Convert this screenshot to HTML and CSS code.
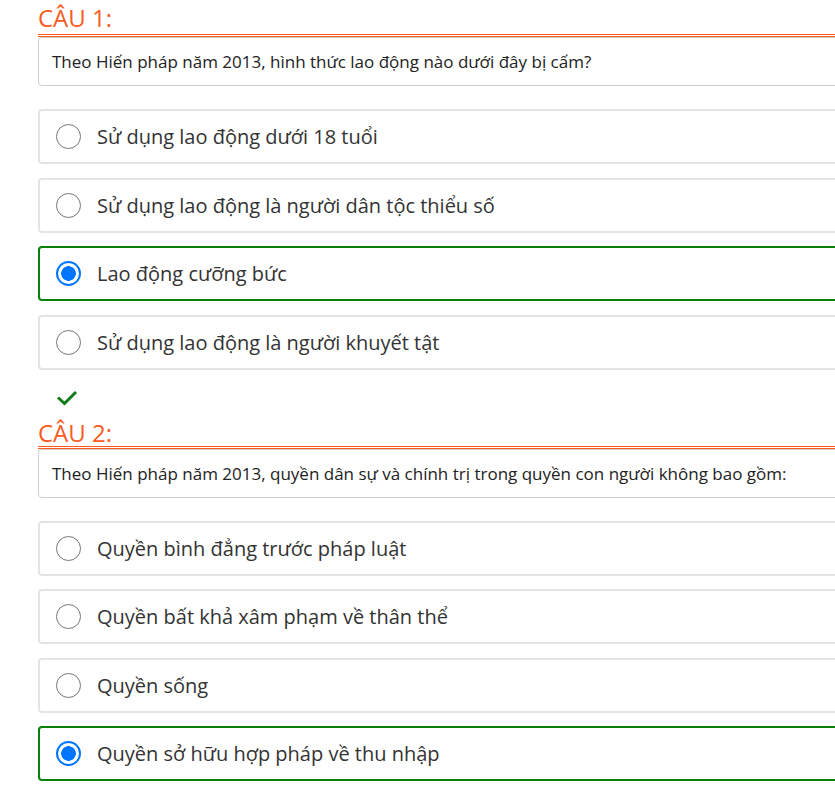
FILE: index.html
```html
<!DOCTYPE html>
<html lang="vi">
<head>
<meta charset="utf-8">
<title>Câu hỏi</title>
<link rel="stylesheet" href="styles.css">
</head>
<body>
<div class="quiz">
  <section class="question">
    <h2 class="q-title">CÂU 1:</h2>
    <div class="q-text">Theo Hiến pháp năm 2013, hình thức lao động nào dưới đây bị cấm?</div>
    <div class="options">
      <label class="option"><span class="radio"></span><span class="opt-text">Sử dụng lao động dưới 18 tuổi</span></label>
      <label class="option"><span class="radio"></span><span class="opt-text">Sử dụng lao động là người dân tộc thiểu số</span></label>
      <label class="option correct"><span class="radio checked"></span><span class="opt-text">Lao động cưỡng bức</span></label>
      <label class="option"><span class="radio"></span><span class="opt-text">Sử dụng lao động là người khuyết tật</span></label>
    </div>
    <div class="result">
      <svg class="check" width="22" height="16" viewBox="0 0 22 16"><path d="M2 7.5 L8.5 13.5 L20 2" fill="none" stroke="#0f7d16" stroke-width="3"/></svg>
    </div>
  </section>
  <section class="question">
    <h2 class="q-title">CÂU 2:</h2>
    <div class="q-text">Theo Hiến pháp năm 2013, quyền dân sự và chính trị trong quyền con người không bao gồm:</div>
    <div class="options">
      <label class="option"><span class="radio"></span><span class="opt-text">Quyền bình đẳng trước pháp luật</span></label>
      <label class="option"><span class="radio"></span><span class="opt-text">Quyền bất khả xâm phạm về thân thể</span></label>
      <label class="option"><span class="radio"></span><span class="opt-text">Quyền sống</span></label>
      <label class="option correct"><span class="radio checked"></span><span class="opt-text">Quyền sở hữu hợp pháp về thu nhập</span></label>
    </div>
  </section>
</div>
</body>
</html>
```
FILE: styles.css
```css
html, body {
  margin: 0;
  padding: 0;
  overflow: hidden;
  background: #fff;
}
body {
  font-family: "Open Sans", "Noto Sans", sans-serif;
  color: #222;
}
.quiz {
  padding-left: 38px;
  width: 830px;
}
.q-title {
  margin: 0;
  font-weight: 400;
  font-size: 24px;
  line-height: 30px;
  height: 31px;
  padding-top: 3px;
  color: #fa5a1e;
  border-bottom: 3px double #fa5a1e;
  box-sizing: content-box;
}
.q-text {
  border: 1px solid #cfcfcf;
  border-radius: 4px;
  height: 47px;
  padding: 0 13px;
  display: flex;
  align-items: center;
  font-size: 17px;
  color: #222;
}
.options {
  display: flex;
  flex-direction: column;
  gap: 13.5px;
  margin-top: 23px;
}
.option {
  display: flex;
  align-items: center;
  height: 51px;
  border: 2px solid #e4e4e4;
  border-radius: 4px;
  padding-left: 16px;
  gap: 16px;
}
.option.correct {
  border-color: #0a800a;
}
.radio {
  width: 25px;
  height: 25px;
  border: 1.5px solid #767676;
  border-radius: 50%;
  box-sizing: border-box;
  flex: none;
}
.radio.checked {
  border: 2px solid #0075ff;
  background: radial-gradient(circle, #0075ff 0 7px, #fff 7.6px);
}
.opt-text {
  font-size: 20px;
  color: #333;
}
.result {
  height: 45px;
  padding-left: 18px;
  padding-top: 20px;
  box-sizing: border-box;
}
.check {
  display: block;
}
.question + .question .q-title {
  height: 28px;
}
```
